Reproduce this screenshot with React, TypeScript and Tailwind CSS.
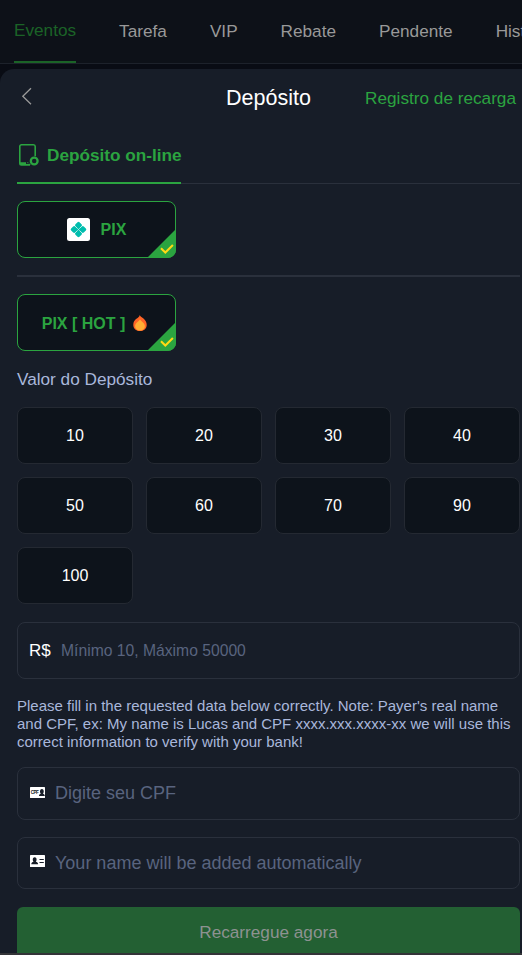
import React from 'react';

const tabs = ['Tarefa', 'VIP', 'Rebate', 'Pendente', 'Histórico'];
const amounts = [10, 20, 30, 40, 50, 60, 70, 90, 100];

const CheckCorner: React.FC = () => (
  <svg className="absolute -right-px -bottom-px h-[29px] w-[29px]" viewBox="0 0 28 28" fill="none">
    <path d="M28 0V20a8 8 0 0 1-8 8H0Z" fill="#2ba440" />
    <path d="M13.500 18.500l4.200 4.200 7.300-7.200" stroke="#ffd914" strokeWidth="2" />
  </svg>
);

const PhoneIcon: React.FC = () => (
  <svg className="h-[22px] w-5 shrink-0" viewBox="0 0 20 22" fill="none">
    <path
      d="M11 20.900H2.500A1.700 1.700 0 0 1 .8 19.200V2.500A1.700 1.700 0 0 1 2.500.8h12a1.700 1.700 0 0 1 1.700 1.700v9.800"
      stroke="#2ba440"
      strokeWidth="1.600"
    />
    <path d="M1 18.200h6v2.900H2.300L1 20Z" fill="#2ba440" />
    <path d="M8.300 18.700h1M9.500 20.300h2" stroke="#2ba440" strokeWidth="1" />
    <circle cx="15.200" cy="17" r="3.400" stroke="#2ba440" strokeWidth="2.300" />
  </svg>
);

const PixIcon: React.FC = () => (
  <svg className="h-[23px] w-[23px]" viewBox="0 0 23 23">
    <rect width="23" height="23" rx="2.500" fill="#fff" />
    <g transform="rotate(45 11.5 11.5)" fill="#00bdae">
      <rect x="5.600" y="5.600" width="5.700" height="5.700" rx="1.400" />
      <rect x="11.700" y="5.600" width="5.700" height="5.700" rx="1.400" />
      <rect x="5.600" y="11.700" width="5.700" height="5.700" rx="1.400" />
      <rect x="11.700" y="11.700" width="5.700" height="5.700" rx="1.400" />
      <rect x="9.500" y="9.500" width="4" height="4" />
    </g>
    <path d="M8 8l7 7M15 8l-7 7" stroke="#d5f5f2" strokeWidth="0.600" />
  </svg>
);

const FireIcon: React.FC = () => (
  <svg className="h-4 w-3.5" viewBox="0 0 14 16">
    <path
      d="M6.800 0c.3 1.400 2 1.900 3.400 3.300 2.200 2 3.500 4 3.500 6.600C13.700 13.500 10.800 16 7 16S.300 13.500.300 9.900C.300 7.600 1.300 5.500 3 4.100 4.700 2.800 6.500 1.600 6.800 0Z"
      fill="#ff6427"
    />
    <path d="M7 4.600c.8 1.500 4.900 3.300 4.900 6.700 0 2.500-2.100 4.300-4.900 4.300s-4.900-1.800-4.900-4.300C2.100 7.900 6.200 6.100 7 4.600Z" fill="#ffae34" />
  </svg>
);

const CpfIcon: React.FC = () => (
  <svg className="mb-0.5 h-[11px] w-[15px] shrink-0" viewBox="0 0 15 11">
    <rect width="15" height="11" rx="0.600" fill="#fff" />
    <text x="0.800" y="7.100" fontSize="4.600" fontWeight="700" textLength="8" fill="#171d28" fontFamily="Liberation Sans, sans-serif">
      CPF
    </text>
    <path d="M9 8.900c0-1.500.8-1.900 1.800-2.200-1.200-1.300-1.100-4.700 1.100-4.700s2.300 3.400 1.100 4.700c1 .3 1.800.7 1.800 2.200Z" fill="#171d28" />
  </svg>
);

const NameIcon: React.FC = () => (
  <svg className="mb-1 h-3 w-[15px] shrink-0" viewBox="0 0 15 12">
    <rect width="15" height="12" rx="0.600" fill="#fff" />
    <path d="M1.300 9.300c0-1.700 1.100-2.100 2.300-2.500C2.300 5.400 2.500 2.300 4.700 2.300s2.400 3.100 1.100 4.500c1.200.4 2.300.8 2.300 2.500Z" fill="#171d28" />
    <path d="M9.500 4.500h4.300M9.500 7.500h4.300" stroke="#171d28" strokeWidth="1.200" />
  </svg>
);

const App: React.FC = () => {
  return (
    <div className="flex h-[955px] w-[522px] flex-col overflow-hidden bg-[#090c14] font-['Liberation_Sans',Arial,sans-serif] text-[17.2px]">
      <nav className="flex h-16 shrink-0 gap-[43px] overflow-hidden border-b border-[#1d222b] bg-[#0d1118] pl-3.5 whitespace-nowrap text-[#999]">
        <a className="h-[63px] border-b-2 border-[#1b6327] leading-[61px] text-[#1b6327]">Eventos</a>
        {tabs.map((tab) => (
          <a key={tab} className="leading-[63px]">{tab}</a>
        ))}
      </nav>

      <main className="mt-[5px] flex min-h-0 flex-1 flex-col overflow-hidden rounded-tl-[14px] bg-[#171d28] pr-0.5 pl-[17px]">
        <header className="grid h-[58px] shrink-0 grid-cols-[1fr_auto_1fr] items-center">
          <svg className="mb-1 ml-[4px] h-[18px] w-3" viewBox="0 0 12 18" fill="none" stroke="#999" strokeWidth="1.300">
            <path d="M10 1.200L1.800 9.200 10 17.200" />
          </svg>
          <h1 className="text-[21.500px] text-white">Depósito</h1>
          <a className="justify-self-end pt-0.5 pr-1 whitespace-nowrap text-[#2ba440]">Registro de recarga</a>
        </header>

        <div className="flex h-[57px] shrink-0 border-b border-[#2a303c]">
          <div className="flex h-[57px] w-[164px] items-center gap-2 border-b-2 border-[#2ba440] pl-0.5 font-bold whitespace-nowrap text-[#2ba440]">
            <PhoneIcon />
            <span className="pt-0.5">Depósito on-line</span>
          </div>
        </div>

        <button className="relative mt-[17px] flex h-[57px] w-[159px] shrink-0 items-center justify-center gap-[11px] rounded-lg border border-[#2ba440] bg-[#0d131b] text-base font-bold text-[#2ba440]">
          <PixIcon />
          PIX
          <CheckCorner />
        </button>

        <hr className="my-[17px] border-t-2 border-[#2a303c]" />

        <button className="relative flex h-[57px] w-[159px] shrink-0 items-center justify-center gap-2 rounded-lg border border-[#2ba440] bg-[#0d131b] pr-1 text-base font-bold text-[#2ba440]">
          <span className="pt-0.5">PIX [ HOT ]</span>
          <FireIcon />
          <CheckCorner />
        </button>

        <h2 className="mt-[15px] leading-[26px] text-[#a9b7db]">Valor do Depósito</h2>

        <div className="mt-[15px] grid shrink-0 grid-cols-4 gap-[13px]">
          {amounts.map((amount) => (
            <button key={amount} className="h-[57px] rounded-lg border border-[#242932] bg-[#0d131b] text-base text-white">
              {amount}
            </button>
          ))}
        </div>

        <div className="mt-[18px] flex h-[57px] shrink-0 items-center rounded-lg border border-[#2a303c] pl-[11px] text-white">
          <span className="w-8 shrink-0 text-[17px]">R$</span>
          <input className="w-full text-[15.700px] outline-none placeholder:text-[#59647f]" placeholder="Mínimo 10, Máximo 50000" />
        </div>

        <p className="mt-[18px] text-[15px] leading-[18px] whitespace-nowrap text-[#a9b7db]">
          Please fill in the requested data below correctly. Note: Payer's real name<br />
          and CPF, ex: My name is Lucas and CPF xxxx.xxx.xxxx-xx we will use this<br />
          correct information to verify with your bank!
        </p>

        <div className="mt-4 flex h-[53px] shrink-0 items-center gap-2.5 rounded-lg border border-[#2a303c] pl-3 text-white">
          <CpfIcon />
          <input className="w-full text-[18px] outline-none placeholder:text-[#59647f]" placeholder="Digite seu CPF" />
        </div>
        <div className="mt-[17px] flex h-[52px] shrink-0 items-center gap-2.5 rounded-lg border border-[#2a303c] pl-3 text-white">
          <NameIcon />
          <input className="w-full text-[18px] outline-none placeholder:text-[#59647f]" placeholder="Your name will be added automatically" />
        </div>

        <button className="mt-[18px] h-[50px] shrink-0 rounded-t-md bg-[#236033] pt-px text-[#8d9291]">
          Recarregue agora
        </button>
      </main>
      <div className="h-0.5 shrink-0 bg-[#333438]" />
    </div>
  );
};

export default App;
